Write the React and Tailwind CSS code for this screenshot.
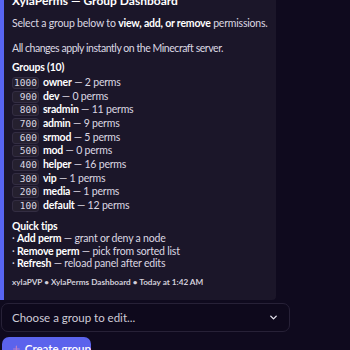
import React from 'react'

const groups = [
  { w: '1000', name: 'owner', n: 2 },
  { w: ' 900', name: 'dev', n: 0 },
  { w: ' 800', name: 'sradmin', n: 11 },
  { w: ' 700', name: 'admin', n: 9 },
  { w: ' 600', name: 'srmod', n: 5 },
  { w: ' 500', name: 'mod', n: 0 },
  { w: ' 400', name: 'helper', n: 16 },
  { w: ' 300', name: 'vip', n: 1 },
  { w: ' 200', name: 'media', n: 1 },
  { w: ' 100', name: 'default', n: 12 },
]

const tips = [
  ['Add perm', 'grant or deny a node'],
  ['Remove perm', 'pick from sorted list'],
  ['Refresh', 'reload panel after edits'],
]

const App = () => {
  return (
    <div className="h-[350px] w-[350px] overflow-hidden bg-[#0f0a1e] font-['Lato',sans-serif] text-[#dbd8e3]">
      <div className="mt-[-10px] w-[276px] rounded-r-[4px] border-l-4 border-[#5865f2] bg-[#1b1629] pl-[8px] pr-2 pt-[2px] pb-[11px] text-[10.5px] tracking-[-0.2px]">
        <div className="text-[12px] font-bold leading-[18px] tracking-normal text-white">XylaPerms — Group Dashboard</div>
        <div className="mt-[4px] whitespace-nowrap leading-[18px]">
          Select a group below to <b className="text-white">view, add, or remove</b> permissions.
        </div>
        <div className="mt-[7px] whitespace-nowrap leading-[18px] tracking-[-0.45px]">All changes apply instantly on the Minecraft server.</div>

        <div className="mt-[1px] font-bold leading-[18px] text-white">Groups (10)</div>
        <div>
          {groups.map((g) => (
            <div key={g.name} className="flex h-[13.7px] items-center gap-[4px]">
              <code className="whitespace-pre rounded-[3px] border border-[#332d42] bg-[#25202f] px-[1px] font-['DejaVu_Sans_Mono',monospace] text-[9.5px] leading-[10px] tracking-normal text-[#dbd8e3]">
                {g.w}
              </code>
              <span><b className="text-white">{g.name}</b> — {g.n} perms</span>
            </div>
          ))}
        </div>

        <div className="mt-[4px] font-bold leading-[18px] text-white">Quick tips</div>
        <div className="mt-[-3px]">
          {tips.map(([a, b]) => (
            <div key={a} className="h-[12.7px] whitespace-nowrap leading-[12.7px]">
              · <b className="text-white">{a}</b> — {b}
            </div>
          ))}
        </div>

        <div className="mt-[5px] whitespace-nowrap text-[8.2px] font-bold leading-[14px] tracking-normal text-[#d2cfda]">
          xylaPVP • XylaPerms Dashboard • Today at 1:42 AM
        </div>
      </div>

      <div className="ml-[1px] mt-[3px] flex h-[29px] w-[289px] items-center justify-between rounded-[7px] border border-[#272137] bg-[#0e091c] pl-[10px] pr-[10px]">
        <span className="text-[11.5px] text-[#cfcbd8]">Choose a group to edit...</span>
        <svg width="11" height="11" viewBox="0 0 24 24" fill="none" stroke="#e6e3ee" strokeWidth="3" strokeLinecap="round" strokeLinejoin="round">
          <path d="M6 9l6 6 6-6" />
        </svg>
      </div>

      <div className="ml-[2px] mt-[5px] flex h-[24px] w-[89px] items-center gap-[5px] whitespace-nowrap rounded-t-[7px] bg-[#5b63ec] pl-[11px] text-[11.5px] font-semibold text-white">
        <svg width="10" height="10" viewBox="0 0 12 12">
          <path d="M6 1v10M1 6h10" stroke="#b97fc7" strokeWidth="2.2" strokeLinecap="round" />
        </svg>
        <span>Create group</span>
      </div>
    </div>
  )
}

export default App
